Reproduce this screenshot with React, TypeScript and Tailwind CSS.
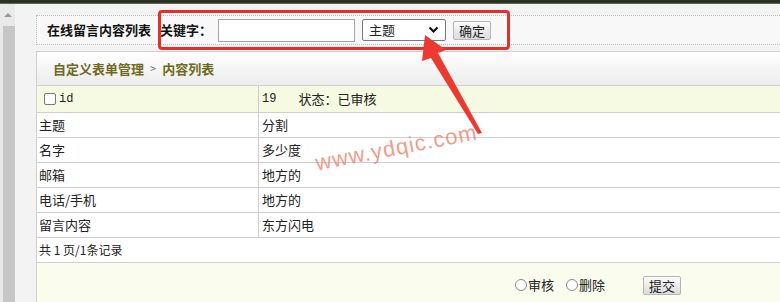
import React from "react";

const rows = [
  { label: "主题", value: "分割" },
  { label: "名字", value: "多少度" },
  { label: "邮箱", value: "地方的" },
  { label: "电话/手机", value: "地方的" },
  { label: "留言内容", value: "东方闪电" },
];

const cn = { fontFamily: '"Noto Sans CJK SC", "Noto Sans", sans-serif' };

const App = () => {
  return (
    <div className="relative w-[780px] h-[302px] overflow-hidden bg-[#f3f3f3] text-[12px] text-[#222]" style={cn}>
      {/* top bar */}
      <div className="h-[4px] bg-[#2c3027] border-b border-[#5d6b3a]" />

      <div className="flex">
        {/* scrollbar */}
        <div className="w-[15px] h-[298px] bg-[#e9e9e9] flex flex-col items-center">
          <div className="mt-[9px] w-0 h-0 border-l-[4px] border-r-[4px] border-b-[4px] border-l-transparent border-r-transparent border-b-[#9a9a9a]" />
          <div className="mt-[9px] ml-[3px] w-[12px] flex-1 bg-[#c6c6c6]" />
        </div>

        {/* main */}
        <div className="flex-1 pl-[21px] pt-[11px]">
          {/* search header */}
          <div className="h-[30px] w-[760px] flex items-center border-y border-l border-dotted border-[#bdbdbd] bg-[#f8f8f8] pl-[10px]">
            <span className="font-bold text-[13px] text-[#111]">在线留言内容列表</span>
            <span className="ml-[9px] font-bold text-[13px] text-[#111]">关键字：</span>
            <input className="ml-[6px] w-[137px] h-[23px] bg-white border border-[#a5a5a5] outline-none" />
            <div className="ml-[7px] w-[84px] h-[22px] bg-white border border-[#7a7a7a] rounded-[2px] flex items-center justify-between px-[6px] text-[13px]">
              <span>主题</span>
              <svg width="11" height="8" viewBox="0 0 11 8">
                <path d="M1.5 1.5 L5.5 5.5 L9.5 1.5" stroke="#111" strokeWidth="2.2" fill="none" />
              </svg>
            </div>
            <button className="ml-[7px] h-[19px] px-[5px] text-[13px] leading-none border border-[#b5b5b5] bg-gradient-to-b from-[#fbfbfb] to-[#dcdcdc] rounded-[2px]">
              确定
            </button>
          </div>

          {/* panel */}
          <div className="mt-[6px] w-[760px] border border-[#cfcfcf] bg-white">
            <div className="h-[34px] flex items-center pl-[16px] bg-gradient-to-b from-white to-[#ececec] border-b border-[#cfcfcf]">
              <span className="font-bold text-[13px] text-[#6e6a1c]">自定义表单管理</span>
              <span className="mx-[6px] text-[11px] text-[#777]">&gt;</span>
              <span className="font-bold text-[13px] text-[#6e6a1c]">内容列表</span>
            </div>

            <div className="h-[27px] flex bg-[#f7fae2] border-b border-[#cfcfcf]">
              <div className="w-[222px] border-r border-[#cfcfcf] flex items-center pl-[7px]">
                <span className="w-[12px] h-[12px] border border-[#777] rounded-[2px] bg-white" />
                <span className="ml-[3px]" style={{ fontFamily: '"Liberation Mono", monospace' }}>id</span>
              </div>
              <div className="flex items-center pl-[3px]">
                <span style={{ fontFamily: '"Liberation Mono", monospace' }}>19</span>
                <span className="ml-[22px] text-[13px]">状态：已审核</span>
              </div>
            </div>

            {rows.map((r, i) => (
              <div key={i} className="h-[25px] flex border-b border-[#cfcfcf]">
                <div className="w-[222px] border-r border-[#cfcfcf] flex items-center pl-[2px] text-[13px]">{r.label}</div>
                <div className="flex items-center pl-[3px] text-[13px]">{r.value}</div>
              </div>
            ))}

            <div className="h-[25px] flex items-center pl-[2px] border-b border-[#cfcfcf]">
              共&nbsp;1&nbsp;页/1条记录
            </div>

            <div className="h-[40px] bg-[#fafcee] flex items-center pl-[478px] pt-[4px]">
              <span className="w-[12px] h-[12px] rounded-full border border-[#8a8a8a] bg-white" />
              <span className="ml-[1px] text-[13px]">审核</span>
              <span className="ml-[12px] w-[12px] h-[12px] rounded-full border border-[#8a8a8a] bg-white" />
              <span className="ml-[1px] text-[13px]">删除</span>
              <button className="ml-[38px] h-[19px] px-[5px] text-[13px] leading-none border border-[#b5b5b5] bg-gradient-to-b from-[#fbfbfb] to-[#dcdcdc] rounded-[2px]">
                提交
              </button>
            </div>
          </div>
        </div>
      </div>

      {/* annotation box */}
      <div className="absolute left-[158px] top-[10px] w-[352px] h-[40px] border-[3px] border-[#e2302c] rounded-[4px]" />

      {/* annotation arrow */}
      <svg className="absolute left-0 top-0" width="780" height="302">
        <polygon points="425,35 446,50 438,53 482,133 478,134 431,58 422,61" fill="#ec3a30" />
      </svg>

      {/* watermark */}
      <div
        className="absolute left-[314px] top-[131px] text-[22px] text-[#f0846f] opacity-80 -rotate-[11deg] tracking-[1px]"
        style={{ fontFamily: '"Liberation Sans", Arial, sans-serif' }}
      >
        www.ydqic.com
      </div>
    </div>
  );
};

export default App;
